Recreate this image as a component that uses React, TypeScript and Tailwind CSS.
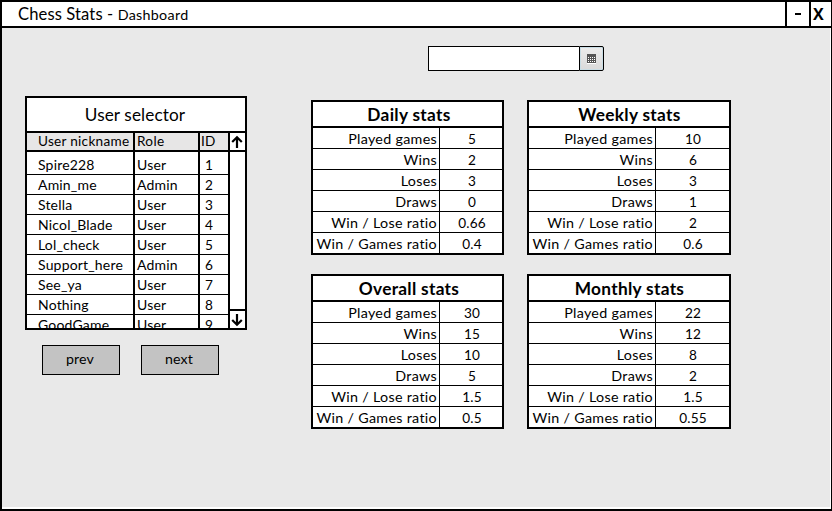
import React from "react";

type Row = [string, string];

const labels = ["Played games", "Wins", "Loses", "Draws", "Win / Lose ratio", "Win / Games ratio"];

const users = [
  ["Spire228", "User", "1"],
  ["Amin_me", "Admin", "2"],
  ["Stella", "User", "3"],
  ["Nicol_Blade", "User", "4"],
  ["Lol_check", "User", "5"],
  ["Support_here", "Admin", "6"],
  ["See_ya", "User", "7"],
  ["Nothing", "User", "8"],
  ["GoodGame", "User", "9"],
];

function StatsCard({ title, values, wide }: { title: string; values: string[]; wide?: boolean }) {
  const rows: Row[] = labels.map((l, i) => [l, values[i]]);
  return (
    <section className={`h-[155px] border-2 border-black bg-white ${wide ? "w-[204px]" : "w-[193px]"}`}>
      <h2 className={`flex h-[26px] items-center justify-center border-b-2 border-black pt-px text-[17.3px] font-bold tracking-[0.3px] ${wide ? "pl-px" : "pl-[3px]"}`}>
        {title}
      </h2>
      {rows.map(([label, value]) => (
        <div key={label} className="flex h-[21px] border-b border-black last:h-5 last:border-b-0">
          <div className="flex w-[127px] shrink-0 items-center justify-end border-r border-black pt-[3px] pr-[2px] text-[14.3px] tracking-[0.3px] whitespace-nowrap">
            {label}
          </div>
          <div className={`flex grow items-center justify-center pt-[3px] ${wide ? "pl-px" : "pl-[2px]"}`}>{value}</div>
        </div>
      ))}
    </section>
  );
}

function Arrow({ down }: { down?: boolean }) {
  return (
    <svg viewBox="0 0 12 14" className={`h-[14px] w-3 -translate-x-px fill-none stroke-black ${down ? "rotate-180" : ""}`} strokeWidth="2.2">
      <path d="M6 13V2.5M1.2 7 6 2.2 10.8 7" />
    </svg>
  );
}

function UserSelector() {
  return (
    <section className="h-[234px] w-[222px] border-2 border-black bg-white">
      <h2 className="flex h-[35px] items-center justify-center border-b-2 border-black pr-[2px] text-[17.2px]">User selector</h2>
      <div className="flex h-[195px]">
        <div className="flex w-[201px] flex-col">
          <div className="flex h-[19px] shrink-0 border-b-2 border-black bg-[#e7e6e6]">
            <div className="w-[108px] border-r-2 border-black pl-[11px] leading-[17px] tracking-[0.27px] whitespace-nowrap">User nickname</div>
            <div className="w-[65px] border-r-2 border-black pl-[2px] leading-[17px] tracking-[0.3px]">Role</div>
            <div className="pl-[1px] leading-[17px]">ID</div>
          </div>
          <div className="h-[176px] overflow-hidden">
            {users.map(([name, role, id]) => (
              <div key={id} className="flex h-5 border-b border-black leading-[20px] first:h-[23px] first:leading-[26px]">
                <div className="w-[108px] border-r-2 border-black pl-[11px] text-[14px] tracking-[0.18px]">{name}</div>
                <div className="w-[65px] border-r-2 border-black pl-[2px] text-[14px] tracking-[0.18px]">{role}</div>
                <div className="pl-[5px]">{id}</div>
              </div>
            ))}
          </div>
        </div>
        <div className="flex w-[17px] flex-col justify-between border-l-2 border-black">
          <div className="flex h-[19px] items-center justify-center border-b-2 border-black"><Arrow /></div>
          <div className="flex h-[19px] items-center justify-center border-t-2 border-black"><Arrow down /></div>
        </div>
      </div>
    </section>
  );
}

function CalendarIcon() {
  return (
    <svg viewBox="0 0 9 10" className="h-[10px] w-[9px]" shapeRendering="crispEdges">
      <path d="M0 0h9v9H0z" fill="#555" />
      <path d="M1 3.5h7M1 5.5h7M1 7.5h7" stroke="#fff" strokeDasharray="1 1" />
      <path d="M0 9.5h9" stroke="#fff" />
    </svg>
  );
}

export default function App() {
  return (
    <div className="flex h-[511px] w-[832px] flex-col overflow-hidden border-2 border-r border-black bg-white font-['Lato',sans-serif] text-[13.6px] leading-none tracking-[0.1px] text-black">
      <header className="flex h-[26px] shrink-0 border-b-2 border-black">
        <div className="flex grow items-baseline pl-4">
          <h1 className="text-[16.6px] leading-[25px] whitespace-pre">Chess Stats - </h1>
          <span className="text-[14.3px] tracking-[0.3px]">Dashboard</span>
        </div>
        <div className="flex w-[24px] items-center justify-center border-l-2 border-black">
          <span className="h-[2px] w-[6px] bg-black" />
        </div>
        <div className="w-[22px] border-l-2 border-black pl-[2px] font-['Open_Sans',sans-serif] text-[16px] leading-[25px] font-bold">X</div>
      </header>
      <main className="mr-px flex h-[479px] bg-[#e9e9e9]">
        <aside className="ml-[23px] w-[222px] pt-[68px]">
          <UserSelector />
          <div className="mt-[15px] ml-[17px] flex gap-[21px]">
            <button className="h-[30px] w-[78px] border border-black bg-[#c3c3c3] pr-[2px] pb-px text-[14.2px]">prev</button>
            <button className="h-[30px] w-[78px] border border-black bg-[#c3c3c3] pr-[2px] pb-px text-[14.2px]">next</button>
          </div>
        </aside>
        <div className="ml-[64px] w-[420px] pt-[18px]">
          <div className="ml-[117px] flex h-[25px] w-[176px]">
            <div className="grow border border-r-0 border-black bg-white" />
            <div className="flex w-[25px] items-center justify-center rounded-r-[2px] border border-black bg-linear-to-b from-[#ececec] to-[#dadada] shadow-[inset_0_0_0_1px_#c9dde5]">
              <CalendarIcon />
            </div>
          </div>
          <div className="mt-[29px] grid grid-cols-[193px_204px] gap-x-[23px] gap-y-[19px]">
            <StatsCard title="Daily stats" values={["5", "2", "3", "0", "0.66", "0.4"]} />
            <StatsCard wide title="Weekly stats" values={["10", "6", "3", "1", "2", "0.6"]} />
            <StatsCard title="Overall stats" values={["30", "15", "10", "5", "1.5", "0.5"]} />
            <StatsCard wide title="Monthly stats" values={["22", "12", "8", "2", "1.5", "0.55"]} />
          </div>
        </div>
      </main>
    </div>
  );
}
